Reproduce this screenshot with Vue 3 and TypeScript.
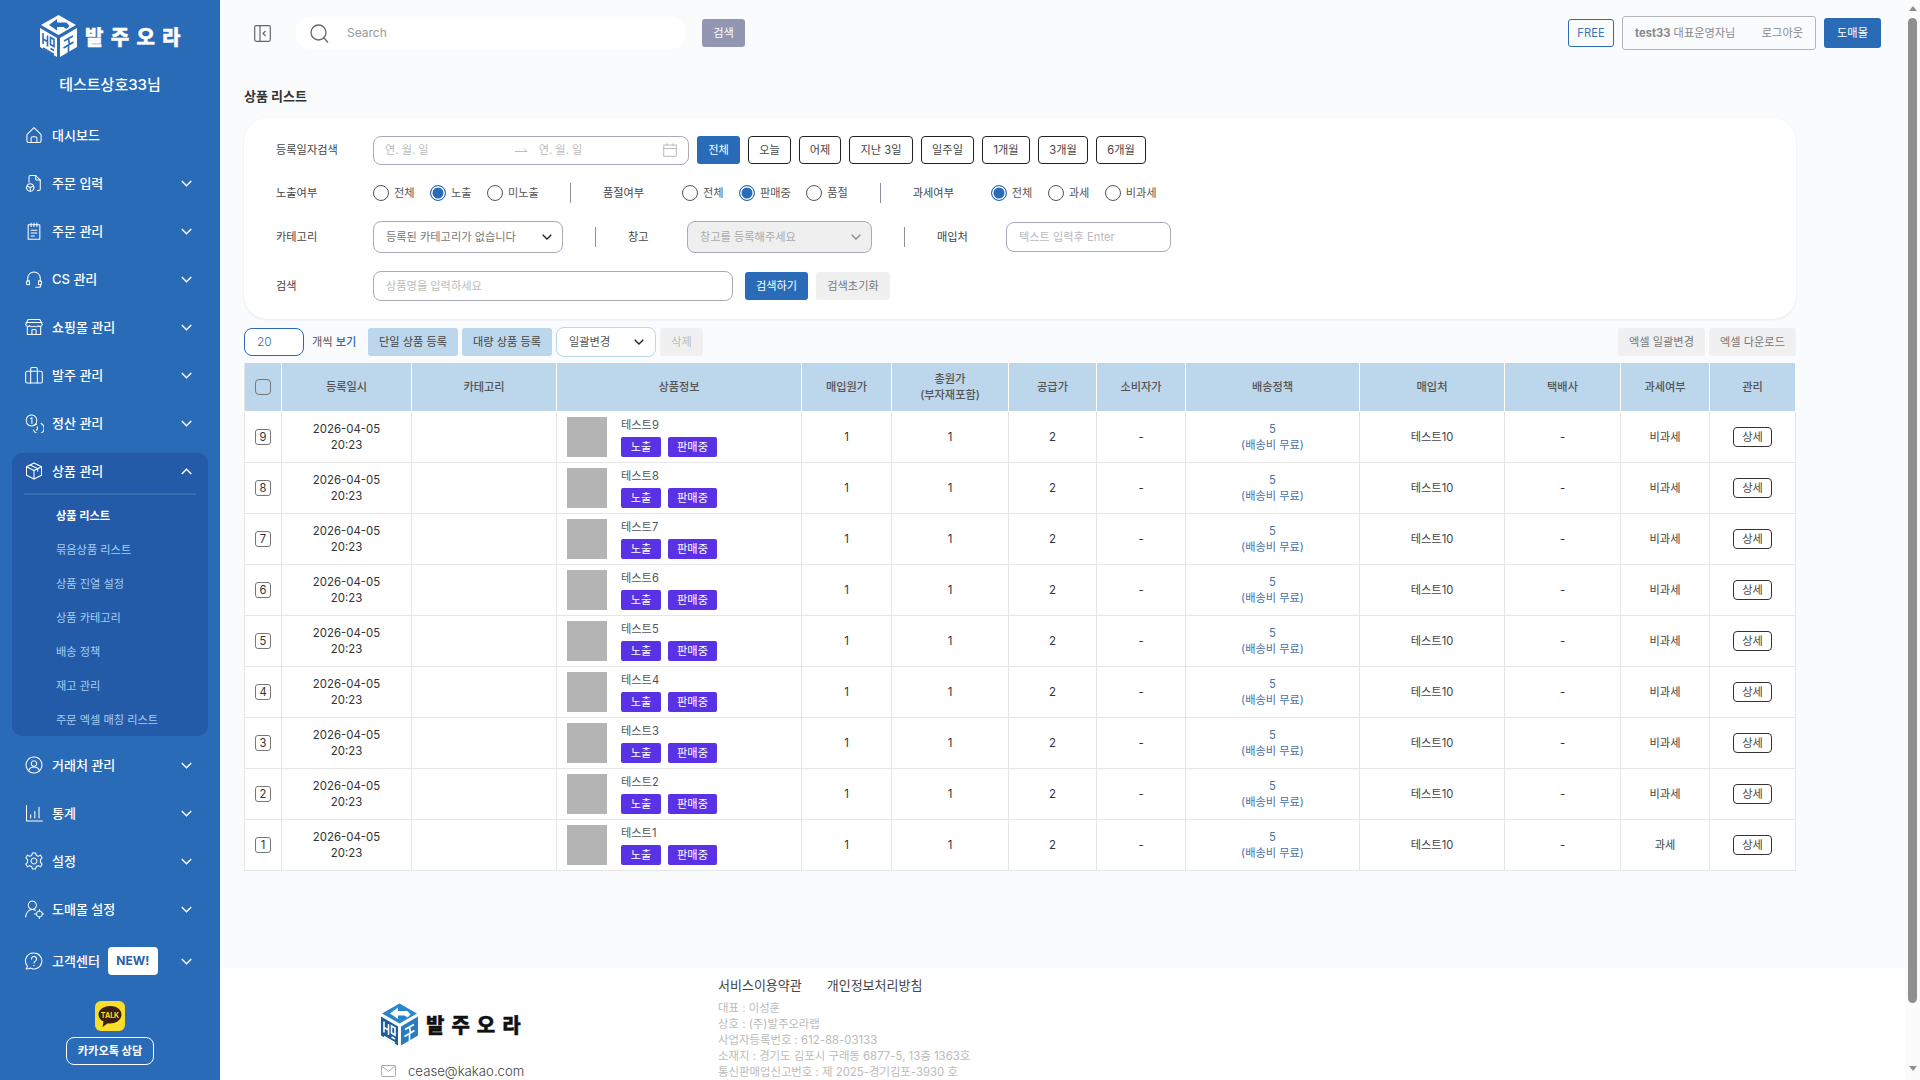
<script setup lang="ts">
interface MenuItem { label: string; icon: string; chevron?: boolean; open?: boolean; badge?: string }

const icons: Record<string, string[]> = {
  home: ['M3.5 11.5 12 3.2l8.5 8.3V19a2 2 0 0 1-2 2h-13a2 2 0 0 1-2-2z', 'M8.5 21v-5a2 2 0 0 1 2-2h3a2 2 0 0 1 2 2v5'],
  doc: ['M6 11V4.5A1.5 1.5 0 0 1 7.5 3H14l0 4.5a1 1 0 0 0 1 1h4.500V19.500A1.500 1.500 0 0 1 18 21h-2', 'M14 3l5.500 5.500', 'M7.500 13a4.500 4.500 0 1 0 .01 0z', 'M4 16l3.500 1.500L11 16', 'M7.500 17.500V22'],
  clip: ['M5 4.500h14v17.500H5z', 'M8.500 2.500v4M12 2.500v4M15.500 2.500v4', 'M8.500 11h7M8.500 14.500h7M8.500 18h4'],
  head: ['M4.500 15V11a7.500 7.500 0 0 1 15 0v4', 'M4 14h2.500v5H5a2 2 0 0 1-2-2v-1a2 2 0 0 1 1-2z', 'M20 14h-2.500v5H19a2 2 0 0 0 2-2v-1a2 2 0 0 0-1-2z', 'M20 19v1a2 2 0 0 1-2 2h-4'],
  shop: ['M5 3h14l3 6a3 3 0 0 1-5 1.500 4 4 0 0 1-5 .5 4 4 0 0 1-5-.5A3 3 0 0 1 2 9z', 'M2.500 6.500h19', 'M4 12v9h16v-9', 'M9.500 21v-5a1 1 0 0 1 1-1h3a1 1 0 0 1 1 1v5'],
  bag: ['M4 7.500h16a2 2 0 0 1 2 2V20a1.500 1.500 0 0 1-1.500 1.500h-17A1.500 1.500 0 0 1 2 20V9.500a2 2 0 0 1 2-2z', 'M8 7.500V4.500a1.500 1.500 0 0 1 1.500-1.500h5A1.500 1.500 0 0 1 16 4.500v3', 'M8 7.500v14M16 7.500v14'],
  coin: ['M9 2.500a6.500 6.500 0 1 0 .01 0z', 'M8 6.500l1.500-1v7', 'M20.500 12.500a6.500 6.500 0 1 1-9 8', 'M12 15a6 6 0 0 1 3-1.500', 'M16 16.500v3l-1 1'],
  box: ['M12 2.500 21 7v10l-9 4.500L3 17V7z', 'M3 7l9 4.500L21 7', 'M12 11.500v10', 'M7.500 4.800l9 4.500v3'],
  user: ['M12 2.500a9.500 9.500 0 1 0 .01 0z', 'M12 7a3.300 3.300 0 1 0 .01 0z', 'M5.500 19c1-3 3.500-4.500 6.500-4.500s5.500 1.500 6.500 4.500'],
  chart: ['M3 3v18.500h19', 'M8 18v-4M13 18V10M18 18V5'],
  gear: ['M10 2.500h4l.7 2.800 2.600 1.100 2.500-1.500 2 3.400-2.100 2 0 3.400 2.100 2-2 3.400-2.500-1.500-2.600 1.100-.7 2.800h-4l-.7-2.800-2.600-1.100-2.500 1.500-2-3.400 2.100-2 0-3.400-2.100-2 2-3.400 2.500 1.500 2.600-1.100z', 'M12 8.500a3.500 3.500 0 1 0 .01 0z'],
  userset: ['M10 2.500a5 5 0 1 0 .01 0z', 'M2 21.500c.5-5 3.500-9 8-9 1.500 0 2.700.4 3.800 1', 'M18.500 14.500a3.500 3.500 0 1 0 .01 0z', 'M18.500 12.500v2M18.500 21.500v2M14 18h-1.500M24 18h-1.500'],
  help: ['M12 2.500a9.500 9.500 0 1 1-4.500 17.900c-1.500 1-3 1.300-5 1.100 1-1 1.500-2.200 1.500-3.500A9.500 9.500 0 0 1 12 2.500z', 'M9 9.500a3 3 0 1 1 4.500 2.600c-1 .6-1.500 1.200-1.500 2.400', 'M12 17v.6']
}

const menuTop: MenuItem[] = [
  { label: '대시보드', icon: 'home' },
  { label: '주문 입력', icon: 'doc', chevron: true },
  { label: '주문 관리', icon: 'clip', chevron: true },
  { label: 'CS 관리', icon: 'head', chevron: true },
  { label: '쇼핑몰 관리', icon: 'shop', chevron: true },
  { label: '발주 관리', icon: 'bag', chevron: true },
  { label: '정산 관리', icon: 'coin', chevron: true }
]
const menuBottom: MenuItem[] = [
  { label: '거래처 관리', icon: 'user', chevron: true },
  { label: '통계', icon: 'chart', chevron: true },
  { label: '설정', icon: 'gear', chevron: true },
  { label: '도매몰 설정', icon: 'userset', chevron: true }
]
const subItems = ['상품 리스트', '묶음상품 리스트', '상품 진열 설정', '상품 카테고리', '배송 정책', '재고 관리', '주문 엑셀 매칭 리스트']

const dateButtons = [
  { t: '오늘', w: 43 }, { t: '어제', w: 42 }, { t: '지난 3일', w: 64 }, { t: '일주일', w: 53 },
  { t: '1개월', w: 48 }, { t: '3개월', w: 50 }, { t: '6개월', w: 50 }
]
const exposure = [{ t: '전체' }, { t: '노출', on: true }, { t: '미노출' }]
const stock = [{ t: '전체' }, { t: '판매중', on: true }, { t: '품절' }]
const tax = [{ t: '전체', on: true }, { t: '과세' }, { t: '비과세' }]

const columns = [
  { w: 37, t: '' }, { w: 130, t: '등록일시' }, { w: 145, t: '카테고리' }, { w: 245, t: '상품정보' },
  { w: 90, t: '매입원가' }, { w: 117, t: '총원가', t2: '(부자재포함)' }, { w: 88, t: '공급가' }, { w: 89, t: '소비자가' },
  { w: 174, t: '배송정책' }, { w: 145, t: '매입처' }, { w: 116, t: '택배사' }, { w: 89, t: '과세여부' }, { w: 86, t: '관리' }
]
const rows = [9, 8, 7, 6, 5, 4, 3, 2, 1].map((n) => ({ n, tax: n === 1 ? '과세' : '비과세' }))
const infoLines = ['대표 : 이성훈', '상호 : (주)발주오라랩', '사업자등록번호 : 612-88-03133', '소재지 : 경기도 김포시 구래동 6877-5, 13층 1363호', '통신판매업신고번호 : 제 2025-경기김포-3930 호']
</script>

<template>
  <div class="page">
    <aside class="side">
      <div class="logo">
        <svg class="cube" viewBox="0 0 37 42">
          <path fill="#fff" d="M18.500 0 36 10 18.500 20 1 10z" />
          <path fill="#2a6bb8" d="M9 10l8-6v3.500h9.500l3 3.500-3 3-3-2H17v3.500z" />
          <path fill="#fff" d="M0 13l17 10v19L0 32z" />
          <path fill="#fff" d="M37 13 20 23v19l17-10z" />
          <path stroke="#2a6bb8" stroke-width="1.600" fill="none" d="M3 18v11M7.500 20.500v11M3 24l4.500 2.500M3 33l11 6.500M10.500 22.500l3.500 2v7l-3.500-2zM10.500 33.500l3.500 2M24 26l9-5M28.500 23.500l1 6M23.500 33l10-6M28.500 30v8" />
        </svg>
        <span class="logo-text">발주오라</span>
      </div>
      <div class="shop-name">테스트상호33님</div>
      <nav class="menu">
        <div v-for="m in menuTop" :key="m.label" class="menu-item">
          <svg class="ico" viewBox="0 0 24 24"><path v-for="d in icons[m.icon]" :key="d" :d="d" /></svg>
          <span class="menu-label">{{ m.label }}</span>
          <svg v-if="m.chevron" class="chev" viewBox="0 0 10 6"><path d="M.7.7 5 5 9.300.7" /></svg>
        </div>
        <div class="panel">
          <div class="menu-item panel-head">
            <svg class="ico" viewBox="0 0 24 24"><path v-for="d in icons.box" :key="d" :d="d" /></svg>
            <span class="menu-label">상품 관리</span>
            <svg class="chev" viewBox="0 0 10 6"><path d="M.7 5.300 5 1l4.300 4.300" /></svg>
          </div>
          <div class="panel-line"></div>
          <div v-for="(s, i) in subItems" :key="s" class="sub" :class="{ active: i === 0 }">{{ s }}</div>
        </div>
        <div v-for="m in menuBottom" :key="m.label" class="menu-item">
          <svg class="ico" viewBox="0 0 24 24"><path v-for="d in icons[m.icon]" :key="d" :d="d" /></svg>
          <span class="menu-label">{{ m.label }}</span>
          <svg class="chev" viewBox="0 0 10 6"><path d="M.7.7 5 5 9.300.7" /></svg>
        </div>
        <div class="menu-item help">
          <svg class="ico" viewBox="0 0 24 24"><path v-for="d in icons.help" :key="d" :d="d" /></svg>
          <span class="menu-label">고객센터</span>
          <span class="new">NEW!</span>
          <svg class="chev" viewBox="0 0 10 6"><path d="M.7.7 5 5 9.300.7" /></svg>
        </div>
      </nav>
      <div class="kakao">
        <svg class="talk" viewBox="0 0 30 30">
          <rect width="30" height="30" rx="6" fill="#f9dd2b" />
          <path fill="#3b1e0f" d="M15 5c-6.400 0-11.500 3.700-11.500 8.500 0 3 2 5.600 5 7L7.500 26l5.300-3.700c.7.100 1.500.200 2.200.200 6.400 0 11.500-3.900 11.500-9S21.400 5 15 5z" />
          <text x="15" y="16.500" text-anchor="middle" class="talk-t">TALK</text>
        </svg>
        <div class="kakao-btn">카카오톡 상담</div>
      </div>
    </aside>

    <main class="main">
      <div class="content">
        <header class="top">
          <svg class="toggle" viewBox="0 0 17 17"><rect x=".7" y=".7" width="15.600" height="15.600" rx="1.500" /><path d="M6 .7v15.600M11.500 6 9 8.500l2.500 2.500" /></svg>
          <div class="search">
            <svg class="search-ico" viewBox="0 0 19 19"><circle cx="8.500" cy="8.500" r="7.500" /><path d="m14 14 4 4.500" /></svg>
            <span class="search-ph">Search</span>
          </div>
          <div class="search-btn">검색</div>
          <div class="top-right">
            <div class="free">FREE</div>
            <div class="who"><span class="who-name"><b>test33</b> 대표운영자님</span><span>로그아웃</span></div>
            <div class="mall">도매몰</div>
          </div>
        </header>

        <h1 class="title">상품 리스트</h1>

        <section class="card">
          <div class="row r1">
            <label class="lab">등록일자검색</label>
            <div class="date">
              <span class="ph d1">연. 월. 일</span>
              <svg class="arrow" viewBox="0 0 13 6"><path d="M0 4.500h12L9 1.500" /></svg>
              <span class="ph d2">연. 월. 일</span>
              <svg class="cal" viewBox="0 0 14 14"><rect x=".7" y="2" width="12.600" height="11.300" /><path d="M.7 5.500h12.600M4 .3V3M10 .3V3" /></svg>
            </div>
            <div class="btn primary all">전체</div>
            <div v-for="b in dateButtons" :key="b.t" class="btn outline" :style="{ width: b.w + 'px' }">{{ b.t }}</div>
          </div>
          <div class="row r2">
            <label class="lab">노출여부</label>
            <div class="radios">
              <span v-for="r in exposure" :key="r.t" class="radio-item"><i class="radio" :class="{ on: r.on }"></i>{{ r.t }}</span>
            </div>
            <i class="vline v1"></i>
            <label class="lab2 l-stock">품절여부</label>
            <div class="radios">
              <span v-for="r in stock" :key="r.t" class="radio-item"><i class="radio" :class="{ on: r.on }"></i>{{ r.t }}</span>
            </div>
            <i class="vline v2"></i>
            <label class="lab2 l-tax">과세여부</label>
            <div class="radios">
              <span v-for="r in tax" :key="r.t" class="radio-item"><i class="radio" :class="{ on: r.on }"></i>{{ r.t }}</span>
            </div>
          </div>
          <div class="row r3">
            <label class="lab">카테고리</label>
            <div class="select s-cat">
              <span>등록된 카테고리가 없습니다</span>
              <svg class="sel-chev" viewBox="0 0 10 6"><path d="M.7.7 5 5 9.300.7" /></svg>
            </div>
            <i class="vline v3"></i>
            <label class="lab2 l-wh">창고</label>
            <div class="select s-wh">
              <span>창고를 등록해주세요</span>
              <svg class="sel-chev dim" viewBox="0 0 10 6"><path d="M.7.7 5 5 9.300.7" /></svg>
            </div>
            <i class="vline v4"></i>
            <label class="lab2 l-buy">매입처</label>
            <div class="input i-buy">텍스트 입력후 Enter</div>
          </div>
          <div class="row r4">
            <label class="lab">검색</label>
            <div class="input i-q">상품명을 입력하세요</div>
            <div class="btn primary find">검색하기</div>
            <div class="btn soft reset">검색초기화</div>
          </div>
        </section>

        <div class="tools">
          <div class="count">20</div>
          <span class="per">개씩 <em>보기</em></span>
          <div class="btn light reg">단일 상품 등록</div>
          <div class="btn light reg">대량 상품 등록</div>
          <div class="bulk"><span>일괄변경</span><svg class="sel-chev" viewBox="0 0 10 6"><path d="M.7.7 5 5 9.300.7" /></svg></div>
          <div class="btn soft del">삭제</div>
          <div class="btn soft xl first">엑셀 일괄변경</div>
          <div class="btn soft xl">엑셀 다운로드</div>
        </div>

        <table class="grid">
          <colgroup><col v-for="(c, i) in columns" :key="i" :style="{ width: c.w + 'px' }" /></colgroup>
          <thead>
            <tr>
              <th v-for="(c, i) in columns" :key="i">
                <i v-if="i === 0" class="check"></i>
                <template v-else>{{ c.t }}<br v-if="c.t2" />{{ c.t2 }}</template>
              </th>
            </tr>
          </thead>
          <tbody>
            <tr v-for="r in rows" :key="r.n">
              <td><span class="idx">{{ r.n }}</span></td>
              <td class="num">2026-04-05<br />20:23</td>
              <td></td>
              <td>
                <div class="prod">
                  <div class="thumb"></div>
                  <div class="prod-info">
                    <div class="prod-name">테스트{{ r.n }}</div>
                    <div class="tags"><span class="tag t-a">노출</span><span class="tag t-b">판매중</span></div>
                  </div>
                </div>
              </td>
              <td class="num">1</td>
              <td class="num">1</td>
              <td class="num">2</td>
              <td class="num">-</td>
              <td class="ship">5<br />(배송비 무료)</td>
              <td>테스트10</td>
              <td class="num">-</td>
              <td>{{ r.tax }}</td>
              <td><span class="detail">상세</span></td>
            </tr>
          </tbody>
        </table>
      </div>

      <footer class="foot">
        <div class="foot-left">
          <div class="foot-logo">
            <svg class="foot-cube" viewBox="0 0 37 42">
              <path fill="#2a86c8" d="M18.500 0 36 10 18.500 20 1 10z" />
              <path fill="#fff" d="M9 10l8-6v3.500h9.500l3 3.500-3 3-3-2H17v3.500z" />
              <path fill="#1b5c9c" d="M0 13l17 10v19L0 32z" />
              <path fill="#2a7cbe" d="M37 13 20 23v19l17-10z" />
              <path stroke="#fff" stroke-width="1.600" fill="none" d="M3 18v11M7.500 20.500v11M3 24l4.500 2.500M3 33l11 6.500M10.500 22.500l3.500 2v7l-3.500-2zM10.500 33.500l3.500 2M24 26l9-5M28.500 23.500l1 6M23.500 33l10-6M28.500 30v8" />
            </svg>
            <span class="foot-logo-text">발주오라</span>
          </div>
          <div class="mail">
            <svg class="mail-ico" viewBox="0 0 15 12"><rect x=".5" y=".5" width="14" height="11" rx="1" /><path d="m.7 1 6.800 5.500L14.300 1" /></svg>
            <span>cease@kakao.com</span>
          </div>
        </div>
        <div class="foot-right">
          <div class="links"><span>서비스이용약관</span><span>개인정보처리방침</span></div>
          <div v-for="l in infoLines" :key="l" class="info">{{ l }}</div>
        </div>
      </footer>
    </main>

    <div class="sbar">
      <i class="tri up"></i>
      <div class="thumb-bar"></div>
      <i class="tri down"></i>
    </div>
  </div>
</template>

<style>
html, body { margin: 0; overflow: hidden; background: #fff; }
</style>

<style scoped>
.page { display: flex; width: 1920px; height: 1080px; overflow: hidden; font-family: Inter, "Noto Sans CJK KR", sans-serif; font-size: 11.200px; line-height: 16px; color: #444; }
i { font-style: normal; display: block; }
em { font-style: normal; }

/* sidebar */
.side { width: 220px; flex: none; background: #2a6bb8; color: #fff; display: flex; flex-direction: column; align-items: center; }
.logo { height: 42px; margin-top: 15px; display: flex; align-items: center; gap: 8px; width: 140px; }
.cube { width: 37px; height: 42px; flex: none; }
.logo-text { font-size: 20px; line-height: 42px; padding-top: 3px; font-weight: 900; letter-spacing: 7.300px; color: #fff; white-space: nowrap; -webkit-text-stroke: .4px #fff; }
.shop-name { margin-top: 17px; font-size: 15px; line-height: 22px; font-weight: 500; }
.menu { width: 100%; margin-top: 15px; }
.menu-item { height: 48px; display: flex; align-items: center; padding: 0 28px 0 24px; box-sizing: border-box; width: 100%; }
.ico { width: 20px; height: 20px; flex: none; fill: none; stroke: #fff; stroke-width: 1.250; stroke-linecap: round; stroke-linejoin: round; }
.menu-label { margin-left: 8px; font-size: 13px; font-weight: 500; white-space: nowrap; }
.chev { margin-left: auto; width: 11px; height: 7px; fill: none; stroke: #fff; stroke-width: 1.300; }
.panel { margin: 6px 12px 5px; background: #235ba8; border-radius: 10px; height: 283px; box-sizing: border-box; }
.panel-head { padding: 0 16px 0 12px; height: 36px; }
.panel-line { height: 2px; margin: 4px 12px 4px; background: #3a6cb2; }
.sub { height: 34px; line-height: 34px; padding-left: 44px; font-size: 11.200px; color: #a8cdf2; white-space: nowrap; }
.sub.active { color: #fff; font-weight: 700; }
.help { margin-top: 2px; height: 52px; }
.new { margin-left: 8px; width: 50px; height: 28px; border-radius: 4px; background: #fff; color: #2a5ea8; font-size: 12px; font-weight: 700; display: flex; align-items: center; justify-content: center; }
.kakao { margin-top: 14px; display: flex; flex-direction: column; align-items: center; gap: 6px; }
.talk { width: 30px; height: 30px; display: block; }
.talk-t { font: 700 7px Inter, sans-serif; fill: #f9dd2b; }
.kakao-btn { width: 88px; height: 28px; box-sizing: border-box; border: 1px solid #fff; border-radius: 8px; display: flex; align-items: center; justify-content: center; font-size: 11.200px; font-weight: 700; }

/* main */
.main { width: 1685px; flex: none; display: flex; flex-direction: column; }
.content { height: 968px; flex: none; background: #f9fbfd; padding-left: 24px; box-sizing: border-box; }
.top { height: 66px; margin-left: -24px; padding-right: 24px; display: flex; align-items: center; }
.toggle { margin-left: 34px; width: 17px; height: 17px; fill: none; stroke: #666; stroke-width: 1.200; flex: none; }
.search { margin-left: 25px; width: 389px; height: 32px; background: #fff; border-radius: 14px; display: flex; align-items: center; }
.search-ico { margin-left: 14px; width: 19px; height: 19px; fill: none; stroke: #666; stroke-width: 1.300; }
.search-ph { margin-left: 18px; font-size: 12px; line-height: 12px; padding-bottom: 1px; color: #999; }
.search-btn { margin-left: 17px; width: 43px; height: 28px; border-radius: 3px; background: #9296b3; color: #fff; display: flex; align-items: center; justify-content: center; }
.top-right { margin-left: auto; display: flex; align-items: center; gap: 8px; }
.free { width: 46px; height: 28px; box-sizing: border-box; border: 1px solid #2a6bb8; border-radius: 3px; color: #3a74b5; display: flex; align-items: center; justify-content: center; }
.who { width: 194px; height: 34px; box-sizing: border-box; border: 1px solid #b5b5b5; border-radius: 3px; padding: 0 12px; display: flex; align-items: center; justify-content: space-between; color: #888; }
.who b { font-weight: 700; }
.mall { width: 57px; height: 30px; border-radius: 3px; background: #2a6bb8; color: #fff; display: flex; align-items: center; justify-content: center; }

.title { margin: 20px 0 12px; height: 20px; font-size: 13px; line-height: 20px; font-weight: 700; color: #333; }

.card { width: 1552px; height: 201px; box-sizing: border-box; background: #fff; border-radius: 24px; box-shadow: 0 1px 3px rgba(0,0,0,.08); padding: 18px 0 0 32px; display: flex; flex-direction: column; gap: 18px; }
.row { display: flex; align-items: center; }
.r1 { height: 29px; align-items: flex-start; }
.r1 .lab { line-height: 28px; }
.r2 { height: 20px; }
.r3 { height: 32px; }
.r4 { height: 30px; }
.lab { width: 97px; flex: none; color: #444; }
.lab2 { flex: none; color: #444; }
.date { width: 316px; height: 29px; box-sizing: border-box; border: 1px solid #a9a9bb; border-radius: 8px; padding-bottom: 1px; display: flex; align-items: center; }
.ph { color: #bbb; white-space: nowrap; }
.d1 { margin-left: 11px; }
.arrow { margin-left: 86px; width: 13px; height: 6px; fill: none; stroke: #bbb; stroke-width: 1; flex: none; }
.d2 { margin-left: 11px; }
.cal { margin-left: auto; margin-right: 11px; width: 14px; height: 14px; fill: none; stroke: #bbb; stroke-width: 1; flex: none; }
.btn { height: 28px; box-sizing: border-box; display: flex; align-items: center; justify-content: center; border-radius: 3px; white-space: nowrap; flex: none; }
.primary { background: #2a6bb8; color: #fff; }
.outline { border: 1px solid #222; color: #444; margin-left: 8px; border-radius: 4px; }
.all { width: 43px; margin-left: 8px; }
.radios { display: flex; gap: 16px; }
.radio-item { display: flex; align-items: center; gap: 5px; color: #555; white-space: nowrap; }
.radio-item + .radio-item { margin-left: -.6px; }
.radio { width: 16px; height: 16px; box-sizing: border-box; border: 1px solid #555; border-radius: 50%; background: #fff; flex: none; }
.radio.on { border-color: #2a6bb8; border-width: 1.500px; box-shadow: inset 0 0 0 1.500px #fff; background: #2a6bb8; }
.vline { width: 1px; background: #8f8fa3; flex: none; }
.v1 { height: 20px; margin-left: 31px; }
.l-stock { margin-left: 32px; width: 79px; }
.v2 { height: 20px; margin-left: 32px; }
.l-tax { margin-left: 32px; width: 78px; }
.select { height: 32px; box-sizing: border-box; border: 1px solid #a9a9bb; border-radius: 8px; display: flex; align-items: center; justify-content: space-between; padding: 0 10px 0 12px; color: #777; flex: none; }
.s-cat { width: 190px; }
.s-wh { width: 185px; background: #efefef; color: #aaa; }
.sel-chev { width: 10px; height: 6px; fill: none; stroke: #222; stroke-width: 1.300; flex: none; }
.sel-chev.dim { stroke: #888; }
.v3 { height: 20px; margin-left: 32px; }
.l-wh { margin-left: 32px; width: 59px; }
.v4 { height: 20px; margin-left: 32px; }
.l-buy { margin-left: 32px; width: 69px; }
.input { height: 30px; box-sizing: border-box; border: 1px solid #a9a9bb; border-radius: 8px; display: flex; align-items: center; padding-left: 12px; color: #bbb; flex: none; }
.i-buy { width: 165px; }
.i-q { width: 360px; }
.find { width: 63px; margin-left: 12px; }
.soft { background: #f0f0f0; color: #777; }
.reset { width: 74px; margin-left: 8px; }

.tools { width: 1552px; height: 30px; margin-top: 8px; display: flex; align-items: center; }
.count { width: 60px; height: 28px; box-sizing: border-box; border: 1px solid #2a6bb8; border-radius: 8px; background: #fff; color: #2a6bb8; font-size: 12px; font-weight: 300; display: flex; align-items: center; padding-left: 12px; }
.per { margin-left: 8px; width: 56px; color: #555; white-space: nowrap; }
.per em { color: #2a6bb8; font-weight: 500; }
.light { background: #bcd6ec; color: #444; width: 90px; }
.reg + .reg { margin-left: 4px; }
.bulk { margin-left: 4px; width: 100px; height: 30px; box-sizing: border-box; border: 1px solid #bcd6ec; border-radius: 8px; background: #fff; display: flex; align-items: center; justify-content: space-between; padding: 0 11px 0 12px; color: #555; }
.del { width: 43px; margin-left: 4px; color: #bbb; }
.xl { width: 87px; }
.first { margin-left: auto; }
.xl + .xl { margin-left: 4px; }

.grid { width: 1551px; margin-top: 6px; table-layout: fixed; border-collapse: collapse; }
.grid th { height: 48px; box-sizing: border-box; padding: 0; background: #bcd6ec; border: 1px solid #fff; border-top: 0; font-weight: 500; color: #555; line-height: 16px; text-align: center; }
.grid td { height: 51px; box-sizing: border-box; padding: 0; background: #fff; border: 1px solid #e6e6e6; text-align: center; color: #444; line-height: 16px; }
.grid th:first-child, .grid td:first-child { border-left: 1px solid #e6e6e6; }
.grid td.num { color: #333; font-size: 11.400px; }
.check { width: 16px; height: 16px; box-sizing: border-box; border: 1px solid #777; border-radius: 4px; margin: 0 auto; }
.idx { display: inline-flex; width: 16px; height: 16px; box-sizing: border-box; border: 1px solid #777; border-radius: 3px; align-items: center; justify-content: center; color: #333; }
.prod { display: flex; padding-left: 10px; text-align: left; }
.thumb { width: 40px; height: 40px; background: #b4b4b4; flex: none; }
.prod-info { margin-left: 14px; display: flex; flex-direction: column; }
.prod-name { height: 20px; line-height: 16px; color: #555; }
.tags { display: flex; gap: 7px; }
.tag { height: 20px; background: #5a32e6; color: #fff; border-radius: 2px; display: flex; align-items: center; justify-content: center; }
.t-a { width: 40px; }
.t-b { width: 49px; }
.grid td.ship { color: #4a72ab; }
.detail { display: inline-flex; width: 39px; height: 20px; box-sizing: border-box; border: 1px solid #333; border-radius: 4px; align-items: center; justify-content: center; color: #444; }

/* footer */
.foot { flex: 1; background: #fff; display: flex; overflow: hidden; }
.foot-left { margin-left: 161px; width: 337px; flex: none; padding-top: 35px; }
.foot-logo { display: flex; align-items: center; gap: 8px; height: 43px; }
.foot-cube { width: 37px; height: 43px; flex: none; }
.foot-logo-text { font-size: 20px; line-height: 43px; padding-top: 3px; font-weight: 900; letter-spacing: 7px; color: #111; white-space: nowrap; -webkit-text-stroke: .4px #111; }
.mail { margin-top: 17px; display: flex; align-items: center; gap: 12px; font-size: 13.200px; font-weight: 300; color: #444; }
.mail-ico { width: 15px; height: 12px; fill: none; stroke: #aaa; stroke-width: 1; }
.foot-right { padding-top: 8px; }
.links { display: flex; gap: 25px; font-size: 13px; line-height: 18px; color: #444; margin-bottom: 6px; }
.info { font-size: 11.400px; line-height: 16px; color: #bbb; white-space: nowrap; }

/* scrollbar */
.sbar { width: 15px; flex: none; background: #fbfbfb; display: flex; flex-direction: column; align-items: center; box-sizing: border-box; padding-top: 6px; }
.tri { width: 0; height: 0; border-left: 4.500px solid transparent; border-right: 4.500px solid transparent; }
.up { border-bottom: 5px solid #8f8f8f; margin-bottom: 7px; }
.down { border-top: 5px solid #8f8f8f; margin-top: 63px; }
.thumb-bar { width: 9px; height: 985px; border-radius: 4.500px; background: #8f8f8f; }
</style>
